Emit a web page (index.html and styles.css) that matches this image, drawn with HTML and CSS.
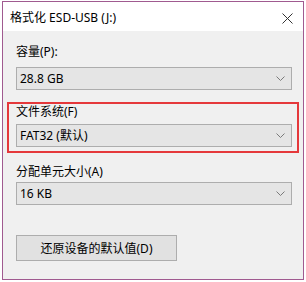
FILE: index.html
```html
<!DOCTYPE html>
<html>
<head>
  <title>格式化 ESD-USB (J:)</title>
  <link rel="stylesheet" href="styles.css">
</head>
<body>
  <div class="format-window">
    <div class="title-bar">
      <span class="title-text">格式化 ESD-USB (J:)</span>
      <svg class="close-icon" width="11" height="11" viewBox="0 0 11 11">
        <path d="M0.5 0.5 L10.5 10.5 M10.5 0.5 L0.5 10.5" stroke="#333" stroke-width="1" fill="none"/>
      </svg>
    </div>

    <div class="dialog-body">
      <div class="field field-capacity">
        <label class="field-label">容量(P):</label>
        <div class="combo">
          <span>28.8 GB</span>
          <svg class="chevron" width="9" height="5" viewBox="0 0 9 5"><polyline points="0.5,0.5 4.5,4.5 8.5,0.5" stroke="#7a7a7a" fill="none"/></svg>
        </div>
      </div>

      <!-- highlighted block -->
      <div class="field field-fs highlight">
        <label class="field-label">文件系统(F)</label>
        <div class="combo">
          <span>FAT32 (默认)</span>
          <svg class="chevron" width="9" height="5" viewBox="0 0 9 5"><polyline points="0.5,0.5 4.5,4.5 8.5,0.5" stroke="#7a7a7a" fill="none"/></svg>
        </div>
      </div>

      <div class="field field-alloc">
        <label class="field-label">分配单元大小(A)</label>
        <div class="combo">
          <span>16 KB</span>
          <svg class="chevron" width="9" height="5" viewBox="0 0 9 5"><polyline points="0.5,0.5 4.5,4.5 8.5,0.5" stroke="#7a7a7a" fill="none"/></svg>
        </div>
      </div>

      <button class="restore-button">还原设备的默认值(D)</button>
    </div>
  </div>
</body>
</html>
```

FILE: styles.css
```css
/* Page */
body {
  margin: 0;
  background: #ffffff;
  font-family: "Noto Sans", "Noto Sans CJK SC", sans-serif;
  font-size: 12px;
  color: #000;
}

/* Window frame */
.format-window {
  margin: 1px 0 0 2px;
  width: 300px;
  height: 277px;
  border: 1px solid #a05a90;
  background: #f0f0f0;
  display: flex;
  flex-direction: column;
}

.title-bar {
  background: #ffffff;
  height: 29px;
  display: flex;
  align-items: center;
  justify-content: space-between;
  padding: 3px 10px 0 7px;
  box-sizing: border-box;
}

.title-text {
  line-height: 16px;
}

.close-icon {
  display: block;
}

/* Dialog content */
.dialog-body {
  padding: 13px 11px 0 13px;
}

.field {
  display: flex;
  flex-direction: column;
}

.field-label {
  line-height: 16px;
  height: 16px;
}

.combo {
  height: 23px;
  box-sizing: border-box;
  border: 1px solid #adadad;
  background: #e5e5e5;
  display: flex;
  align-items: center;
  justify-content: space-between;
  padding: 0 4px 0 3px;
  line-height: 16px;
}

.chevron {
  display: block;
  margin-right: 2px;
}

.field-capacity .combo {
  margin-top: 7px;
}

.field-fs {
  margin-top: 12px;
}

.field-fs .combo {
  margin-top: 4px;
}

/* red annotation box */
.highlight {
  border: 2px solid #e5383b;
  margin-left: -9px;
  margin-right: -7px;
  padding: 0 5px 4px 7px;
}

.field-alloc {
  margin-top: 11px;
}

.field-alloc .combo {
  margin-top: 2px;
}

.restore-button {
  display: block;
  margin-top: 30px;
  width: 161px;
  height: 26px;
  border: 1px solid #adadad;
  background: #e1e1e1;
  font-family: inherit;
  font-size: 12px;
  color: #000;
  padding: 0;
}
```
